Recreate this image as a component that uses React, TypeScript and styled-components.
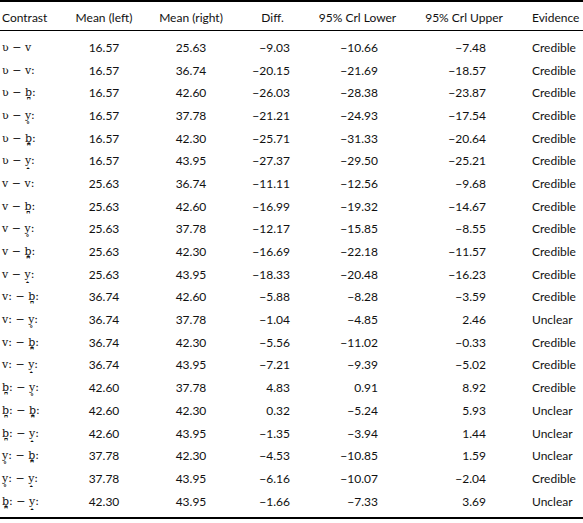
import React from 'react';
import styled, { createGlobalStyle } from 'styled-components';

const GlobalStyle = createGlobalStyle`
  html, body {
    margin: 0;
    padding: 0;
    background: #fff;
  }
`;

type Row = [string, string, string, string, string, string, string];

// contrast pairs use thin spaces around the minus
const rows: Row[] = [
  ['ʋ − v', '16.57', '25.63', '−9.03', '−10.66', '−7.48', 'Credible'],
  ['ʋ − v:', '16.57', '36.74', '−20.15', '−21.69', '−18.57', 'Credible'],
  ['ʋ − b̪:', '16.57', '42.60', '−26.03', '−28.38', '−23.87', 'Credible'],
  ['ʋ − y̥:', '16.57', '37.78', '−21.21', '−24.93', '−17.54', 'Credible'],
  ['ʋ − b̪̥:', '16.57', '42.30', '−25.71', '−31.33', '−20.64', 'Credible'],
  ['ʋ − y̝:', '16.57', '43.95', '−27.37', '−29.50', '−25.21', 'Credible'],
  ['v − v:', '25.63', '36.74', '−11.11', '−12.56', '−9.68', 'Credible'],
  ['v − b̪:', '25.63', '42.60', '−16.99', '−19.32', '−14.67', 'Credible'],
  ['v − y̥:', '25.63', '37.78', '−12.17', '−15.85', '−8.55', 'Credible'],
  ['v − b̪̥:', '25.63', '42.30', '−16.69', '−22.18', '−11.57', 'Credible'],
  ['v − y̝:', '25.63', '43.95', '−18.33', '−20.48', '−16.23', 'Credible'],
  ['v: − b̪:', '36.74', '42.60', '−5.88', '−8.28', '−3.59', 'Credible'],
  ['v: − y̥:', '36.74', '37.78', '−1.04', '−4.85', '2.46', 'Unclear'],
  ['v: − b̪̥:', '36.74', '42.30', '−5.56', '−11.02', '−0.33', 'Credible'],
  ['v: − y̝:', '36.74', '43.95', '−7.21', '−9.39', '−5.02', 'Credible'],
  ['b̪: − y̥:', '42.60', '37.78', '4.83', '0.91', '8.92', 'Credible'],
  ['b̪: − b̪̥:', '42.60', '42.30', '0.32', '−5.24', '5.93', 'Unclear'],
  ['b̪: − y̝:', '42.60', '43.95', '−1.35', '−3.94', '1.44', 'Unclear'],
  ['y̥: − b̪̥:', '37.78', '42.30', '−4.53', '−10.85', '1.59', 'Unclear'],
  ['y̥: − y̝:', '37.78', '43.95', '−6.16', '−10.07', '−2.04', 'Credible'],
  ['b̪̥: − y̝:', '42.30', '43.95', '−1.66', '−7.33', '3.69', 'Unclear'],
];

const headers = ['Contrast', 'Mean (left)', 'Mean (right)', 'Diff.', '95% Crl Lower', '95% Crl Upper', 'Evidence'];

// grid track each column sits in (spacer tracks between them)
const cols = [1, 2, 3, 5, 7, 9, 11];
const aligns: Array<'left' | 'center' | 'right'> = ['left', 'center', 'center', 'right', 'right', 'right', 'left'];

const Table = styled.div`
  width: 583px;
  border-top: 2px solid #000;
  border-bottom: 2px solid #000;
  font-family: Lato, 'Open Sans', sans-serif;
  font-size: 12px;
  color: #111;
`;

const Grid = styled.div`
  display: grid;
  grid-template-columns: 60px 88px 86px 21px 35px 47px 41px 64px 44px 46px 1fr;
`;

const Head = styled(Grid)`
  height: 29px;
  align-items: center;
  padding-top: 3px;
  box-sizing: border-box;
  border-bottom: 1px solid #000;
`;

const Body = styled.div`
  padding: 5px 0 5px;
`;

const BodyRow = styled(Grid)`
  height: 22.7px;
  align-items: center;
`;

const HeadCell = styled.div<{ $col: number; $first?: boolean; $last?: boolean }>`
  grid-column: ${(p) => p.$col};
  display: flex;
  justify-content: ${(p) => (p.$first || p.$last ? 'flex-start' : 'center')};
  padding-left: ${(p) => (p.$first ? '2px' : '0')};
  white-space: nowrap;
`;

const Cell = styled.div<{ $col: number; $align: 'left' | 'center' | 'right' }>`
  grid-column: ${(p) => p.$col};
  display: flex;
  justify-content: ${(p) =>
    p.$align === 'left' ? 'flex-start' : p.$align === 'right' ? 'flex-end' : 'center'};
  white-space: nowrap;
`;

const Phon = styled(Cell)`
  font-family: 'DejaVu Serif', 'Liberation Serif', serif;
  font-size: 11px;
  padding-left: 2px;
`;

const App = () => {
  return (
    <>
      <GlobalStyle />
      <Table>
        <Head>
          {headers.map((h, i) => (
            <HeadCell key={h} $col={cols[i]} $first={i === 0} $last={i === 6}>
              {h}
            </HeadCell>
          ))}
        </Head>
        <Body>
          {rows.map((r, ri) => (
            <BodyRow key={ri}>
              {r.map((v, ci) =>
                ci === 0 ? (
                  <Phon key={ci} $col={cols[ci]} $align="left">
                    {v}
                  </Phon>
                ) : (
                  <Cell key={ci} $col={cols[ci]} $align={aligns[ci]}>
                    {v}
                  </Cell>
                )
              )}
            </BodyRow>
          ))}
        </Body>
      </Table>
    </>
  );
};

export default App;
